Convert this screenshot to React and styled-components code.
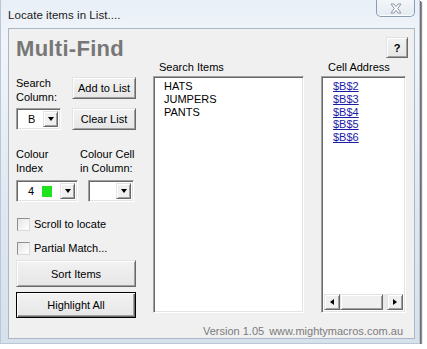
import React from "react";
import styled, { createGlobalStyle } from "styled-components";

const GlobalStyle = createGlobalStyle`
  html, body {
    margin: 0;
    padding: 0;
    background: #ffffff;
  }
  body {
    font-family: "Liberation Sans", Arial, sans-serif;
    font-size: 11px;
    color: #000;
  }
`;

const searchItems = ["HATS", "JUMPERS", "PANTS"];
const addresses = ["$B$2", "$B$3", "$B$4", "$B$5", "$B$6"];

export default function App() {
  return (
    <>
      <GlobalStyle />
      <Window>
        <TitleBar>
          <Title>Locate items in List....</Title>
          <CloseButton>
            <svg width="14" height="11" viewBox="0 0 14 11">
              <path
                d="M2 1 L5 1 L7 3.6 L9 1 L12 1 L8.8 5.5 L12 10 L9 10 L7 7.4 L5 10 L2 10 L5.2 5.5 Z"
                fill="#f7f9fb"
                stroke="#8592a3"
                strokeWidth="0.9"
                strokeLinejoin="round"
              />
            </svg>
          </CloseButton>
        </TitleBar>

        <Client>
          <Columns>
            <LeftColumn>
              <Heading>Multi-Find</Heading>

              <ControlRow $top={15}>
                <FieldLabel>
                  Search
                  <br />
                  Column:
                </FieldLabel>
                <PushButton $width={64} $height={22}>
                  Add to List
                </PushButton>
              </ControlRow>

              <ControlRow $top={9}>
                <Combo $width={45} value="B" />
                <PushButton $width={64} $height={22}>
                  Clear List
                </PushButton>
              </ControlRow>

              <ColourRow>
                <ColourGroup $width={64}>
                  <FieldLabel>
                    Colour
                    <br />
                    Index
                  </FieldLabel>
                  <Combo $width={62} value="4" swatch="#1fe31f" />
                </ColourGroup>
                <ColourGroup $width={56}>
                  <FieldLabel>
                    Colour Cell
                    <br />
                    in Column:
                  </FieldLabel>
                  <ComboSlot>
                    <Combo $width={46} value="" />
                  </ComboSlot>
                </ColourGroup>
              </ColourRow>

              <CheckRow $top={15}>
                <CheckBox />
                Scroll to locate
              </CheckRow>
              <CheckRow $top={10}>
                <CheckBox />
                Partial Match...
              </CheckRow>

              <PushButton $height={27} $top={5}>
                Sort Items
              </PushButton>
              <PushButton $height={26} $top={5} $default>
                Highlight All
              </PushButton>
            </LeftColumn>

            <MiddleColumn>
              <ColumnLabel>Search Items</ColumnLabel>
              <ListBox>
                <ListItems $padLeft={8}>
                  {searchItems.map((item) => (
                    <ListLine key={item}>{item}</ListLine>
                  ))}
                </ListItems>
              </ListBox>
            </MiddleColumn>

            <RightColumn>
              <HelpButton>?</HelpButton>
              <ColumnLabel $indent={7}>Cell Address</ColumnLabel>
              <ListBox $width={85}>
                <ListItems $padLeft={9}>
                  {addresses.map((a) => (
                    <LinkLine key={a}>{a}</LinkLine>
                  ))}
                </ListItems>
                <HScroll>
                  <ScrollArrow>
                    <Tri $dir="left" />
                  </ScrollArrow>
                  <ScrollThumb />
                  <ScrollTrack />
                  <ScrollArrow>
                    <Tri $dir="right" />
                  </ScrollArrow>
                </HScroll>
              </ListBox>
            </RightColumn>
          </Columns>

          <Footer>
            Version 1.05<Site>www.mightymacros.com.au</Site>
          </Footer>
        </Client>
      </Window>
    </>
  );
}

function Combo({ $width, value, swatch }) {
  return (
    <ComboField $width={$width}>
      <ComboValue>
        {value}
        {swatch && <Swatch $color={swatch} />}
      </ComboValue>
      <DropButton>
        <Tri $dir="down" />
      </DropButton>
    </ComboField>
  );
}

const Window = styled.div`
  width: 420px;
  height: 344px;
  box-sizing: border-box;
  display: flex;
  flex-direction: column;
  padding: 0 4px 4px 7px;
  background: linear-gradient(180deg, #e8eff7 0%, #f1f5f9 12%, #dfe8f1 60%, #d6e1ec 100%);
  border: 1px solid #b9c7d6;
  border-top: none;
  box-shadow: 1px 1px 0 #6f6f6f, 2px 2px 1px rgba(0, 0, 0, 0.45);
`;

const TitleBar = styled.div`
  height: 28px;
  flex: none;
  display: flex;
  justify-content: space-between;
  align-items: flex-start;
`;

const Title = styled.div`
  font-size: 11.5px;
  color: #1b1b1b;
  margin-top: 9px;
  letter-spacing: 0.05px;
`;

const CloseButton = styled.div`
  width: 39px;
  height: 17px;
  box-sizing: border-box;
  display: flex;
  align-items: center;
  justify-content: center;
  border: 1px solid #8b9bb0;
  border-top: none;
  border-radius: 0 0 5px 5px;
  background: linear-gradient(180deg, #f3f6f9, #e4ebf2);
  box-shadow: inset 0 -1px 0 #fbfcfd;
`;

const Client = styled.div`
  flex: 1;
  display: flex;
  flex-direction: column;
  background: #f0f0f0;
  border: 1px solid #a9b7c6;
  padding: 5px 9px 0 7px;
`;

const Columns = styled.div`
  display: grid;
  grid-template-columns: 120px 151px 87px;
  column-gap: 17px;
`;

const LeftColumn = styled.div`
  display: flex;
  flex-direction: column;
`;

const Heading = styled.div`
  font-size: 22px;
  font-weight: bold;
  line-height: 26px;
  margin-top: 2px;
  color: #777777;
  letter-spacing: 0.3px;
`;

const ControlRow = styled.div`
  display: flex;
  justify-content: space-between;
  align-items: flex-start;
  margin-top: ${(p) => p.$top}px;
  height: 22px;
`;

const FieldLabel = styled.div`
  line-height: 13.5px;
  white-space: nowrap;
`;

const PushButton = styled.div`
  box-sizing: border-box;
  width: ${(p) => (p.$width ? `${p.$width}px` : "100%")};
  height: ${(p) => p.$height}px;
  margin-top: ${(p) => p.$top || 0}px;
  display: flex;
  align-items: center;
  justify-content: center;
  background: linear-gradient(180deg, #f2f2f2, #e6e6e6);
  border: 1px solid;
  border-color: #e3e3e3 #696969 #696969 #e3e3e3;
  box-shadow: inset 1px 1px 0 #ffffff, inset -1px -1px 0 #a0a0a0;
  ${(p) =>
    p.$default &&
    `
    border-color: #000;
    box-shadow: inset 1px 1px 0 #fff, inset -1px -1px 0 #696969, inset -2px -2px 0 #a0a0a0;
  `}
`;

const ComboField = styled.div`
  box-sizing: border-box;
  width: ${(p) => p.$width}px;
  height: 22px;
  display: flex;
  background: #fff;
  border: 1px solid;
  border-color: #a0a0a0 #ffffff #ffffff #a0a0a0;
  box-shadow: inset 1px 1px 0 #696969, inset -1px -1px 0 #e3e3e3;
  padding: 2px;
`;

const ComboValue = styled.div`
  flex: 1;
  display: flex;
  align-items: center;
  padding-left: 9px;
  gap: 8px;
`;

const Swatch = styled.span`
  width: 10px;
  height: 11px;
  background: ${(p) => p.$color};
`;

const DropButton = styled.div`
  box-sizing: border-box;
  width: 15px;
  display: flex;
  align-items: center;
  justify-content: center;
  background: #f0f0f0;
  border: 1px solid;
  border-color: #e3e3e3 #696969 #696969 #e3e3e3;
  box-shadow: inset 1px 1px 0 #fff, inset -1px -1px 0 #a0a0a0;
`;

const Tri = styled.span`
  width: 0;
  height: 0;
  border-style: solid;
  ${(p) =>
    p.$dir === "down"
      ? "border-width: 4px 3.5px 0 3.5px; border-color: #000 transparent transparent transparent;"
      : p.$dir === "left"
      ? "border-width: 3.5px 4px 3.5px 0; border-color: transparent #000 transparent transparent;"
      : "border-width: 3.5px 0 3.5px 4px; border-color: transparent transparent transparent #000;"}
`;

const ColourRow = styled.div`
  display: flex;
  margin-top: 18px;
`;

const ColourGroup = styled.div`
  width: ${(p) => p.$width}px;
  display: flex;
  flex-direction: column;
  gap: 5px;
`;

const ComboSlot = styled.div`
  padding-left: 8px;
`;

const CheckRow = styled.div`
  display: flex;
  align-items: center;
  gap: 4px;
  height: 14px;
  margin-top: ${(p) => p.$top}px;
  padding-left: 1px;
`;

const CheckBox = styled.span`
  box-sizing: border-box;
  width: 13px;
  height: 13px;
  background: linear-gradient(135deg, #e6e6e6, #ffffff);
  border: 1px solid;
  border-color: #8e8f8f #d9d9d9 #d9d9d9 #8e8f8f;
`;

const MiddleColumn = styled.div`
  display: flex;
  flex-direction: column;
  padding-top: 26px;
`;

const RightColumn = styled.div`
  display: flex;
  flex-direction: column;
  align-items: flex-start;
  padding-top: 3px;
`;

const ColumnLabel = styled.div`
  line-height: 14px;
  padding-left: ${(p) => (p.$indent ? p.$indent : 6)}px;
  margin-bottom: 2px;
`;

const HelpButton = styled(PushButton)`
  width: 22px;
  height: 21px;
  align-self: flex-end;
  font-weight: bold;
  margin-bottom: 2px;
`;

const ListBox = styled.div`
  box-sizing: border-box;
  width: ${(p) => (p.$width ? `${p.$width}px` : "100%")};
  height: 237px;
  display: flex;
  flex-direction: column;
  background: #fff;
  border: 1px solid;
  border-color: #a0a0a0 #ffffff #ffffff #a0a0a0;
  box-shadow: inset 1px 1px 0 #696969, inset -1px -1px 0 #e3e3e3;
  padding: 2px;
`;

const ListItems = styled.div`
  flex: 1;
  padding-left: ${(p) => p.$padLeft}px;
  padding-top: 1px;
`;

const ListLine = styled.div`
  line-height: 12.75px;
`;

const LinkLine = styled.div`
  line-height: 12.75px;
  color: #1c1ca8;
  text-decoration: underline;
`;

const HScroll = styled.div`
  height: 16px;
  display: flex;
`;

const ScrollArrow = styled.div`
  box-sizing: border-box;
  width: 16px;
  display: flex;
  align-items: center;
  justify-content: center;
  background: #f0f0f0;
  border: 1px solid;
  border-color: #e3e3e3 #696969 #696969 #e3e3e3;
  box-shadow: inset 1px 1px 0 #fff, inset -1px -1px 0 #a0a0a0;
`;

const ScrollThumb = styled(ScrollArrow)`
  width: 43px;
`;

const ScrollTrack = styled.div`
  flex: 1;
  background: #eaeaea;
`;

const Footer = styled.div`
  margin-top: auto;
  text-align: right;
  color: #7b7b7b;
  line-height: 14px;
  padding-bottom: 0;
  padding-right: 2px;
`;

const Site = styled.span`
  margin-left: 5px;
`;
